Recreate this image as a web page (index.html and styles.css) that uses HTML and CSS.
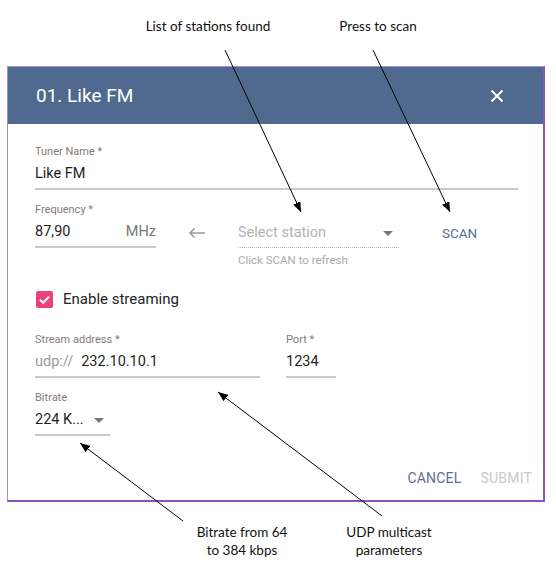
FILE: index.html
```html
<!DOCTYPE html>
<html>
<head>
<meta charset="utf-8">
<link rel="stylesheet" href="styles.css">
</head>
<body>
<div class="page">
  <div class="notes-top">
    <div class="note">List of stations found</div>
    <div class="note">Press to scan</div>
  </div>

  <div class="dialog">
    <div class="dialog-header">
      <div class="dialog-title">01. Like FM</div>
      <svg class="close" width="14" height="14" viewBox="0 0 14 14"><path d="M1.5 1.5 L12.5 12.5 M12.5 1.5 L1.5 12.5" stroke="#fff" stroke-width="2" fill="none"/></svg>
    </div>
    <div class="dialog-body">
      <div class="field field-name">
        <div class="label">Tuner Name *</div>
        <div class="value">Like FM</div>
      </div>

      <div class="row-freq">
        <div class="field field-freq">
          <div class="label">Frequency *</div>
          <div class="value value-split"><span>87,90</span><span class="unit">MHz</span></div>
        </div>
        <svg class="arrow-left" width="18" height="12" viewBox="0 0 18 12"><path d="M17 6 H2 M6.5 1.5 L2 6 L6.5 10.5" stroke="#9a9a9a" stroke-width="1.6" fill="none"/></svg>
        <div class="select-col">
          <div class="field-select">
            <span>Select station</span>
            <span class="tri"></span>
          </div>
          <div class="helper">Click SCAN to refresh</div>
        </div>
        <div class="scan">SCAN</div>
      </div>

      <div class="check-row">
        <span class="checkbox"><svg width="17" height="17" viewBox="0 0 17 17"><path d="M4 8.8 L7.2 11.8 L13 5.6" stroke="#fff" stroke-width="2" fill="none"/></svg></span>
        <span class="check-label">Enable streaming</span>
      </div>

      <div class="row-stream">
        <div class="field field-addr">
          <div class="label">Stream address *</div>
          <div class="value"><span class="prefix">udp://</span>232.10.10.1</div>
        </div>
        <div class="field field-port">
          <div class="label">Port *</div>
          <div class="value">1234</div>
        </div>
      </div>

      <div class="field field-bitrate">
        <div class="label">Bitrate</div>
        <div class="value value-split"><span>224 K...</span><span class="tri"></span></div>
      </div>

      <div class="actions">
        <span class="btn btn-cancel">CANCEL</span>
        <span class="btn btn-submit">SUBMIT</span>
      </div>
    </div>
  </div>

  <div class="notes-bottom">
    <div class="note">Bitrate from 64<br>to 384 kbps</div>
    <div class="note">UDP multicast<br>parameters</div>
  </div>

  <svg class="overlay" width="556" height="574" viewBox="0 0 556 574">
    <defs>
      <marker id="ah" markerWidth="10" markerHeight="8" refX="10" refY="4" orient="auto" markerUnits="userSpaceOnUse">
        <path d="M0 0 L10 4 L0 8 Z" fill="#000"/>
      </marker>
    </defs>
    <g stroke="#000" stroke-width="1" fill="none">
      <line x1="225" y1="50" x2="301" y2="212" marker-end="url(#ah)"/>
      <line x1="373" y1="50" x2="450" y2="212" marker-end="url(#ah)"/>
      <line x1="183" y1="521" x2="80" y2="443" marker-end="url(#ah)"/>
      <line x1="382" y1="516" x2="218" y2="392" marker-end="url(#ah)"/>
    </g>
  </svg>
</div>
</body>
</html>
```
FILE: styles.css
```css
* { box-sizing: border-box; }
html, body { margin: 0; padding: 0; background: #fff; }
body { font-family: Roboto, "Liberation Sans", Arial, sans-serif; color: #222; }
.page { position: relative; width: 556px; height: 574px; overflow: hidden; }

.notes-top { height: 66px; display: flex; gap: 40px; padding-left: 143px; padding-top: 17px; }
.notes-top .note { width: 130px; }
.note { font-family: Lato, "Open Sans", sans-serif; font-size: 13.5px; line-height: 18px; text-align: center; color: #111; }
.notes-bottom { display: flex; gap: 27px; padding-left: 182px; padding-top: 21px; }
.notes-bottom .note { width: 120px; }

.dialog {
  margin-left: 7px; width: 538px; height: 436px;
  border-top: 1px solid #a58dcc; border-left: 1px solid #a58dcc;
  border-right: 2px solid #8955b8; border-bottom: 2px solid #8955b8;
  background: #fff;
  display: flex; flex-direction: column;
}
.dialog-header {
  height: 57px; background: #4f6a8e;
  display: flex; align-items: center; justify-content: space-between;
  padding: 0 39px 0 28px;
}
.dialog-title { color: #fff; font-size: 19px; }
.close { display: block; }

.dialog-body { flex: 1; padding: 20px 11px 4px 27px; display: flex; flex-direction: column; }

.field { display: flex; flex-direction: column; }
.label { font-size: 11px; line-height: 16px; color: #857a7a; }
.value { font-size: 14.5px; line-height: 22px; margin-top: 3px; padding-bottom: 3px; border-bottom: 2px solid #c9c9c9; color: #1e1e1e; }
.value-split { display: flex; justify-content: space-between; align-items: center; }
.unit { color: #777; }

.field-name { width: 483px; }

.row-freq { display: flex; margin-top: 12px; align-items: flex-start; }
.field-freq { width: 121px; }
.arrow-left { display: block; margin-left: 32px; margin-top: 25px; }
.select-col { margin-left: 32px; padding-top: 20px; width: 161px; }
.field-select { display: flex; justify-content: space-between; align-items: center; font-size: 14.5px; line-height: 22px; color: #b3b3b3; border-bottom: 1px dotted #bbb; padding-bottom: 3px; padding-right: 6px; }
.tri { width: 0; height: 0; border-left: 5px solid transparent; border-right: 5px solid transparent; border-top: 5px solid #777; }
.helper { font-size: 11.5px; line-height: 14px; color: #aaa; margin-top: 5px; }
.scan { margin-left: 43px; margin-top: 23px; font-size: 13.5px; line-height: 16px; color: #5b6f95; }

.check-row { display: flex; align-items: center; height: 24px; margin-top: 20px; margin-left: 1px; }
.checkbox { width: 17px; height: 17px; border-radius: 2px; background: #ea4279; display: flex; align-items: center; justify-content: center; }
.checkbox svg { display: block; }
.check-label { margin-left: 10px; font-size: 15px; color: #222; }

.row-stream { display: flex; gap: 26px; margin-top: 21px; }
.field-addr { width: 225px; }
.field-port { width: 50px; }
.prefix { color: #999; margin-right: 8px; }

.field-bitrate { width: 75px; margin-top: 12px; }
.field-bitrate .tri { margin-right: 6px; }

.actions { margin-top: auto; height: 36px; display: flex; justify-content: flex-end; align-items: center; gap: 19px; }
.btn { font-size: 14px; letter-spacing: 0.2px; }
.btn-cancel { color: #5b6f95; }
.btn-submit { color: #c9c9c9; }

.overlay { position: absolute; left: 0; top: 0; pointer-events: none; }
```
